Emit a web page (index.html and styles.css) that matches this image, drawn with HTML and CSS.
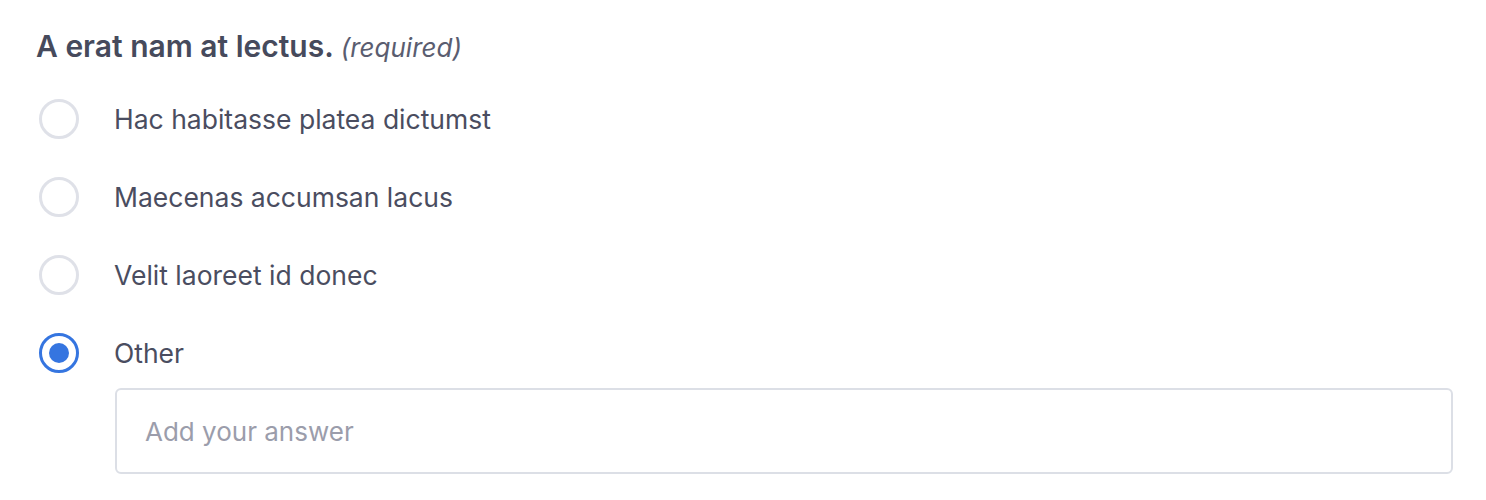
FILE: index.html
```html
<!DOCTYPE html>
<html lang="en">
<head>
<meta charset="utf-8">
<title>Question</title>
<link rel="stylesheet" href="styles.css">
</head>
<body>
<div class="question" role="radiogroup" aria-labelledby="q-title">
  <div class="title" id="q-title">A erat nam at lectus. <span class="req">(required)</span></div>
  <label class="option"><input type="radio" name="q" class="radio"><span class="label">Hac habitasse platea dictumst</span></label>
  <label class="option"><input type="radio" name="q" class="radio"><span class="label">Maecenas accumsan lacus</span></label>
  <label class="option"><input type="radio" name="q" class="radio"><span class="label">Velit laoreet id donec</span></label>
  <label class="option"><input type="radio" name="q" class="radio" checked><span class="label">Other</span></label>
  <div class="other">
    <input type="text" class="answer" placeholder="Add your answer">
  </div>
</div>
</body>
</html>
```
FILE: styles.css
```css
html, body {
  margin: 0;
  padding: 0;
  background: #ffffff;
}
body {
  font-family: Inter, "Open Sans", sans-serif;
  color: #4a4d60;
}
.question {
  padding: 26px 33px 0 36px;
  display: flex;
  flex-direction: column;
}
.title {
  font-size: 30px;
  font-weight: 600;
  color: #464a5c;
  line-height: 40px;
  margin-bottom: 31px;
  white-space: nowrap;
}
.req {
  font-size: 26px;
  font-weight: 400;
  font-style: italic;
  color: #5a5d70;
}
.option {
  display: flex;
  align-items: center;
  height: 40px;
  margin-bottom: 38px;
  margin-left: 3px;
  cursor: pointer;
}
.radio {
  appearance: none;
  -webkit-appearance: none;
  margin: 0;
  width: 40px;
  height: 40px;
  border: 3px solid #dfe1e8;
  border-radius: 50%;
  box-sizing: border-box;
  display: grid;
  place-items: center;
  flex: none;
}
.radio:checked {
  border-color: #3575e0;
}
.radio:checked::after {
  content: "";
  width: 20px;
  height: 20px;
  border-radius: 50%;
  background: #3575e0;
}
.label {
  margin-left: 35px;
  font-size: 26.5px;
  line-height: 34px;
}
.other {
  margin-left: 79px;
  margin-top: -23px;
}
.answer {
  display: block;
  width: 100%;
  box-sizing: border-box;
  height: 86px;
  margin: 0;
  border: 2px solid #dcdfe6;
  border-radius: 6px;
  padding: 0 28px;
  font-family: inherit;
  font-size: 26px;
  color: #4a4d60;
  outline: none;
}
.answer::placeholder {
  color: #9b9dab;
}
```
